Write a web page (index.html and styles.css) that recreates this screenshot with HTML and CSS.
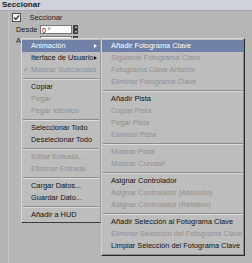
FILE: index.html
```html
<!DOCTYPE html>
<html>
<head>
<meta charset="utf-8">
<link rel="stylesheet" href="styles.css">
</head>
<body>
<div class="panel">
  <div class="header">Seccionar</div>
  <div class="body">
    <div class="row check-row">
      <span class="checkbox"><svg width="7" height="7" viewBox="0 0 7 7"><path d="M1 3.5 L2.8 5.3 L6 1.5" fill="none" stroke="#222" stroke-width="1.2"/></svg></span>
      <span class="dash">-</span>
      <span class="lbl">Seccionar</span>
    </div>
    <div class="row field-row">
      <span class="bullet"></span>
      <span class="lbl name">Desde</span>
      <span class="input">0 °</span>
      <span class="spin"><i class="up"></i><i class="down"></i></span>
    </div>
    <div class="row field-row">
      <span class="bullet"></span>
      <span class="lbl name">A</span>
      <span class="input">0 °</span>
      <span class="spin"><i class="up"></i><i class="down"></i></span>
    </div>
  </div>
</div>

<div class="menu menu1">
  <div class="item hl sub">Animación</div>
  <div class="item sub">Iterface de Usuario</div>
  <div class="item dis checked">Mostrar Subcanales</div>
  <div class="sep"></div>
  <div class="item">Copiar</div>
  <div class="item dis">Pegar</div>
  <div class="item dis">Pegar Idéntico</div>
  <div class="sep"></div>
  <div class="item">Seleccionar Todo</div>
  <div class="item">Deselecionar Todo</div>
  <div class="sep"></div>
  <div class="item dis">Editar Entrada...</div>
  <div class="item dis">Eliminar Entrada</div>
  <div class="sep"></div>
  <div class="item">Cargar Datos...</div>
  <div class="item">Guardar Dato...</div>
  <div class="sep"></div>
  <div class="item">Añadir a HUD</div>
</div>

<div class="menu menu2">
  <div class="item hl">Añadir Fotograma Clave</div>
  <div class="item dis">Siguiente Fotograma Clave</div>
  <div class="item dis">Fotograma Clave Anterior</div>
  <div class="item dis">Eliminar Fotograma Clave</div>
  <div class="sep"></div>
  <div class="item">Añadir Pista</div>
  <div class="item dis">Copiar Pista</div>
  <div class="item dis">Pegar Pista</div>
  <div class="item dis">Eliminar Pista</div>
  <div class="sep"></div>
  <div class="item dis">Mostrar Pista</div>
  <div class="item dis">Mostrar CurvasF</div>
  <div class="sep"></div>
  <div class="item">Asignar Controlador</div>
  <div class="item dis">Asignar Controlador (Absoluto)</div>
  <div class="item dis">Asignar Controlador (Relativo)</div>
  <div class="sep"></div>
  <div class="item">Añadir Selección al Fotograma Clave</div>
  <div class="item dis">Eliminar Selección del Fotograma Clave</div>
  <div class="item">Limpiar Selección del Fotograma Clave</div>
</div>
</body>
</html>
```

FILE: styles.css
```css
html, body {
  margin: 0;
  padding: 0;
  width: 252px;
  height: 263px;
  overflow: hidden;
  background: #b4b4b4;
  font-family: "Liberation Sans", Arial, sans-serif;
  font-size: 7.4px;
  color: #111;
}

.panel {
  display: flex;
  flex-direction: column;
}

.header {
  height: 10px;
  line-height: 10px;
  padding-left: 2px;
  background: #cfd2da;
  font-weight: bold;
  font-size: 8px;
  color: #1a1a22;
  border-bottom: 1px solid #a8a8ae;
}

.body {
  display: flex;
  flex-direction: column;
  padding-top: 1px;
  border-left: 1px solid #c4c4c4;
  margin-left: 8px;
  height: 252px;
  background: #b6b6b6;
}

.row {
  display: flex;
  align-items: center;
}

.check-row {
  height: 10px;
  padding-left: 3px;
  margin-bottom: 2px;
}

.checkbox {
  width: 7px;
  height: 7px;
  background: #f4f4f4;
  border: 1px solid #555;
  display: flex;
  align-items: center;
  justify-content: center;
}

.dash {
  color: #9a9a9a;
  margin: 0 3px 0 3px;
}

.lbl {
  color: #222;
}

.field-row {
  height: 11px;
  position: relative;
}

.bullet {
  width: 4px;
  height: 4px;
  margin-left: -5px;
  margin-right: 4px;
  border-radius: 50%;
  background: #c8c8c8;
  border: 1px solid #aaa;
  box-sizing: border-box;
}

.name {
  width: 24px;
  margin-left: 4px;
}

.input {
  width: 32px;
  height: 9px;
  line-height: 9px;
  background: #fbfbfb;
  border: 1px solid #777;
  box-sizing: border-box;
  padding-left: 1px;
  font-size: 7px;
}

.spin {
  width: 5px;
  height: 9px;
  margin-left: 1px;
  background: #3e3e3e;
  display: flex;
  flex-direction: column;
  align-items: center;
  justify-content: space-around;
}

.spin i {
  width: 0;
  height: 0;
  border-left: 1.5px solid transparent;
  border-right: 1.5px solid transparent;
}

.spin .up { border-bottom: 2px solid #ddd; }
.spin .down { border-top: 2px solid #ddd; }

.menu {
  position: absolute;
  top: 38px;
  background: #bdbdbd;
  padding: 1px 0;
  box-sizing: border-box;
}

.menu1 {
  left: 21px;
  width: 80px;
  border-top: 1px solid #d8d8d8;
  border-left: 1px solid #d8d8d8;
  border-bottom: 1px solid #3c3c3c;
  border-right: 1px solid #9a9a9a;
}

.menu2 {
  left: 101px;
  width: 144px;
  padding-bottom: 3px;
  border-top: 1px solid #d8d8d8;
  border-left: 1px solid #d0d0d0;
  border-bottom: 1px solid #2a2a2a;
  border-right: 1px solid #2a2a2a;
  box-shadow: inset -1px -1px 0 #8a8a8a;
}

.item {
  height: 12px;
  line-height: 12px;
  padding-left: 9px;
  white-space: nowrap;
  position: relative;
  color: #111;
}

.item.dis {
  color: #8f8f8f;
}

.item.hl {
  background: #7080a6;
  color: #fff;
}

.item.sub::after {
  content: "";
  position: absolute;
  right: 3px;
  top: 4px;
  border-top: 2px solid transparent;
  border-bottom: 2px solid transparent;
  border-left: 3px solid #111;
}

.item.hl.sub::after {
  border-left-color: #fff;
}

.item.checked::before {
  content: "✓";
  position: absolute;
  left: 1px;
  top: 0;
  color: #8f8f8f;
  font-size: 7px;
}

.sep {
  height: 0;
  margin: 2px 1px 1px 1px;
  border-top: 1px solid #8c8c8c;
  border-bottom: 1px solid #dcdcdc;
}
```
